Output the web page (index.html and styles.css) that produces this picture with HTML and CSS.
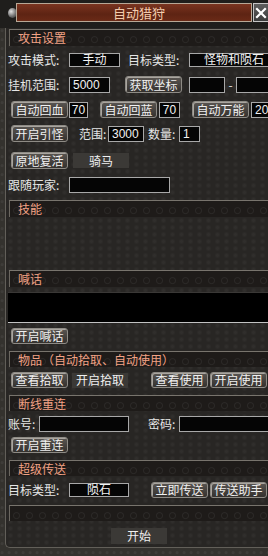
FILE: index.html
```html
<!DOCTYPE html>
<html lang="zh">
<head>
<meta charset="UTF-8">
<meta name="viewport" content="width=device-width, initial-scale=1.0">
<link rel="stylesheet" href="styles.css">
<title>自动猎狩</title>
</head>
<body>
<div class="frame">
  <div class="titlebar">
    <span class="knob"></span>
    <div class="title">自动猎狩</div>
    <div class="close">
      <svg width="12" height="12" viewBox="0 0 12 12"><path d="M2 2 L10 10 M10 2 L2 10" stroke="#ffffff" stroke-width="2.2" stroke-linecap="square"/></svg>
    </div>
  </div>

  <div class="window">
    <div class="section s-attack">攻击设置</div>

    <div class="row r1">
      <span class="label w61">攻击模式:</span>
      <span class="field c w51">手动</span>
      <span class="label w61 ml8">目标类型:</span>
      <span class="field c w90">怪物和陨石</span>
    </div>

    <div class="row r2">
      <span class="label w61">挂机范围:</span>
      <span class="field tall w41">5000</span>
      <span class="btn ml15">获取坐标</span>
      <span class="field tall w36 ml7"></span>
      <span class="dash">-</span>
      <span class="field tall w60"></span>
    </div>

    <div class="row r3">
      <span class="btn ml3">自动回血</span>
      <span class="field tall c w19 ml1">70</span>
      <span class="btn ml12">自动回蓝</span>
      <span class="field tall c w21 ml2">70</span>
      <span class="btn ml12">自动万能</span>
      <span class="field tall w30 ml2">20</span>
    </div>

    <div class="row r4">
      <span class="btn ml3">开启引怪</span>
      <span class="label w29 ml11">范围:</span>
      <span class="field tall w36">3000</span>
      <span class="label w31 ml4">数量:</span>
      <span class="field tall w21">1</span>
    </div>

    <div class="row r5">
      <span class="btn ml3">原地复活</span>
      <span class="flat ml5">骑马</span>
    </div>

    <div class="row r6">
      <span class="label w61">跟随玩家:</span>
      <span class="field tall w101"></span>
    </div>

    <div class="section s-skill">技能</div>

    <div class="section s-shout">喊话</div>
    <div class="shoutbox"></div>
    <div class="row r-shout">
      <span class="btn short ml3">开启喊话</span>
    </div>

    <div class="section short s-item">物品（自动拾取、自动使用）</div>
    <div class="row r-item">
      <span class="btn short ml3">查看拾取</span>
      <span class="flat ml4">开启拾取</span>
      <span class="btn short ml23">查看使用</span>
      <span class="btn short ml2">开启使用</span>
    </div>

    <div class="section short s-reconnect">断线重连</div>
    <div class="row r-account">
      <span class="label w31">账号:</span>
      <span class="field tall w90"></span>
      <span class="label w31 ml19">密码:</span>
      <span class="field tall w90"></span>
    </div>
    <div class="row r-reconnect">
      <span class="btn short ml3">开启重连</span>
    </div>

    <div class="section short s-teleport">超级传送</div>
    <div class="row r-teleport">
      <span class="label w61">目标类型:</span>
      <span class="field c w60">陨石</span>
      <span class="btn short ml22">立即传送</span>
      <span class="btn short ml2">传送助手</span>
    </div>

    <div class="section short s-empty"></div>

    <div class="row r-start">
      <span class="flat start">开始</span>
    </div>
  </div>
</div>
</body>
</html>
```

FILE: styles.css
```css
* {
  box-sizing: border-box;
}
body {
  margin: 0;
  width: 268px;
  height: 556px;
  overflow: hidden;
  background-color: #34322e;
  font-family: "Noto Sans CJK SC", "Liberation Sans", sans-serif;
  font-size: 12px;
  line-height: 1;
  color: #e6e6e6;
}
.frame {
  height: 556px;
  background-image: radial-gradient(circle at 30% 40%, rgba(255,255,255,0.05) 1px, transparent 2px);
  background-size: 7px 9px;
}
.titlebar {
  height: 28px;
  display: flex;
  align-items: flex-start;
  background-color: #1f1e1c;
}
.knob {
  flex: none;
  width: 9px;
  height: 10px;
  margin: 8px 0 0 8px;
  border-radius: 50%;
  background: radial-gradient(circle at 35% 35%, #e0e0e0, #707070 55%, #2a2a2a);
}
.title {
  flex: none;
  width: 236px;
  height: 19px;
  margin: 3px 0 0 -1px;
  padding-left: 10px;
  border: 1px solid #b8a896;
  background: linear-gradient(#7a3420, #5e2413 60%, #6a2a17);
  color: #f4ccae;
  font-size: 13px;
  display: flex;
  align-items: center;
  justify-content: center;
}
.close {
  flex: none;
  width: 16px;
  height: 19px;
  margin: 3px 0 0 1px;
  border: 1px solid #c4c4c4;
  background: linear-gradient(#5e5e5e, #3c3c3c);
  display: flex;
  align-items: center;
  justify-content: center;
}
.window {
  margin-left: 5px;
  height: 520px;
  padding-left: 2px;
  border-left: 1px solid #625f59;
  border-bottom: 1px solid #625f59;
  border-bottom-left-radius: 5px;
  background-color: #282624;
  background-image: radial-gradient(circle at 50% 50%, rgba(255,255,255,0.035) 1px, transparent 3px);
  background-size: 9px 7px;
  display: flex;
  flex-direction: column;
}
.section {
  flex: none;
  height: 17px;
  margin-left: 1px;
  padding-left: 8px;
  border-top: 1px solid #78746d;
  border-left: 1px solid #6a665f;
  background-color: #1e1b19;
  background-image: radial-gradient(circle at 50% 60%, transparent 2px, rgba(255,255,255,0.06) 3px, transparent 4px);
  background-size: 13px 16px;
  color: #f2a285;
  display: flex;
  align-items: center;
}
.section.short {
  height: 16px;
}
.row {
  flex: none;
  display: flex;
  align-items: center;
}
.label {
  flex: none;
  white-space: nowrap;
}
.field {
  flex: none;
  height: 14px;
  padding-left: 3px;
  border: 1px solid #a8a8a8;
  background-color: #050505;
  color: #f2f2f2;
  font-family: "Liberation Sans", "Noto Sans CJK SC", sans-serif;
  display: flex;
  align-items: center;
  white-space: nowrap;
}
.field.c {
  justify-content: center;
  padding-left: 0;
}
.field.tall {
  height: 16px;
}
.btn {
  flex: none;
  width: 57px;
  height: 17px;
  border: 1px solid #8e8b85;
  border-radius: 3px;
  background: linear-gradient(#5a5652, #34312e);
  box-shadow: inset 1px 1px 0 #a9a59f;
  color: #f0f0f0;
  display: flex;
  align-items: center;
  justify-content: center;
  white-space: nowrap;
}
.btn.short {
  height: 16px;
}
.flat {
  flex: none;
  width: 56px;
  height: 15px;
  background-color: #3b3936;
  color: #f0f0f0;
  display: flex;
  align-items: center;
  justify-content: center;
  white-space: nowrap;
}
.dash {
  flex: none;
  width: 11px;
  text-align: center;
}
.shoutbox {
  flex: none;
  height: 31px;
  margin-top: 5px;
  border-top: 1px solid #3a3836;
  border-bottom: 1px solid #c2c2c2;
  background-color: #000000;
}
.start {
  margin-left: 103px;
  height: 16px;
}

/* widths */
.w19 { width: 19px; }
.w21 { width: 21px; }
.w29 { width: 29px; }
.w30 { width: 30px; }
.w31 { width: 31px; }
.w36 { width: 36px; }
.w41 { width: 41px; }
.w51 { width: 51px; }
.w60 { width: 60px; }
.w61 { width: 61px; }
.w90 { width: 90px; }
.w101 { width: 101px; }

/* spacing */
.ml1 { margin-left: 1px; }
.ml2 { margin-left: 2px; }
.ml3 { margin-left: 3px; }
.ml4 { margin-left: 4px; }
.ml5 { margin-left: 5px; }
.ml7 { margin-left: 7px; }
.ml8 { margin-left: 8px; }
.ml11 { margin-left: 11px; }
.ml12 { margin-left: 12px; }
.ml15 { margin-left: 15px; }
.ml19 { margin-left: 19px; }
.ml22 { margin-left: 22px; }
.ml23 { margin-left: 23px; }

/* vertical rhythm */
.s-attack { margin-top: 1px; }
.r1 { margin-top: 7px; }
.r2 { margin-top: 9px; }
.r3 { margin-top: 8px; }
.r4 { margin-top: 7px; }
.r5 { margin-top: 10px; }
.r6 { margin-top: 8px; }
.s-skill { margin-top: 7px; }
.s-shout { margin-top: 53px; }
.r-shout { margin-top: 5px; }
.s-item { margin-top: 7px; }
.r-item { margin-top: 5px; }
.s-reconnect { margin-top: 7px; }
.r-account { margin-top: 5px; }
.r-reconnect { margin-top: 5px; }
.s-teleport { margin-top: 7px; }
.r-teleport { margin-top: 6px; }
.s-empty { margin-top: 7px; }
.r-start { margin-top: 7px; }
```
